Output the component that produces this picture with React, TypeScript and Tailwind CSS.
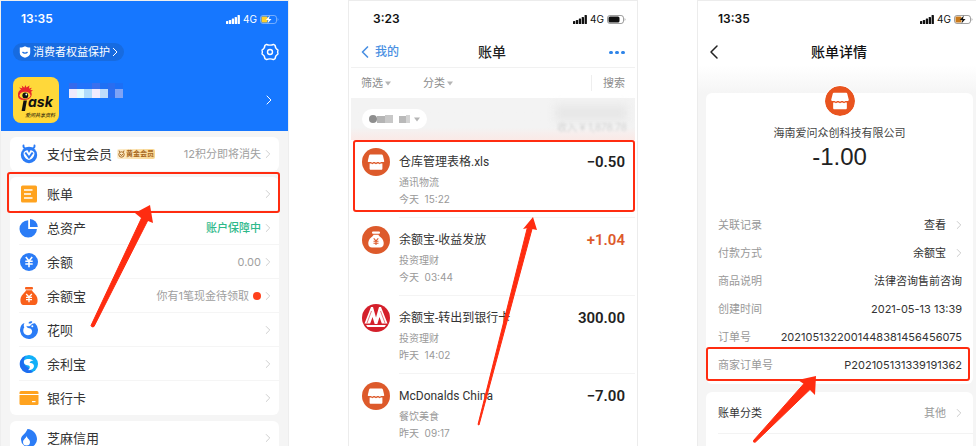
import React from "react";
import { ChevronLeft, ChevronRight } from "lucide-react";

const RED = "#ff2c10";

function StatusBar({ time, charge, tone }: { time: string; charge: string | null; tone: "light" | "dark" }) {
  const ink = tone === "light" ? "#ffffff" : "#111111";
  return (
    <div className={`flex h-9 items-center justify-between ${tone === "light" ? "text-white" : "text-[#111111]"}`}>
      <span className="text-[12px] leading-4 font-semibold">{time}</span>
      <span className="flex items-center gap-[3px]">
        <svg width="14" height="9" viewBox="0 0 14 9" fill={ink} aria-hidden="true">
          <rect x="0" y="6" width="2.300" height="3" rx="0.6" />
          <rect x="2.900" y="5" width="2.300" height="4" rx="0.6" />
          <rect x="5.800" y="3.500" width="2.300" height="5.500" rx="0.6" />
          <rect x="8.700" y="2" width="2.300" height="7" rx="0.6" />
          <rect x="11.600" y="0" width="2.300" height="9" rx="0.6" />
        </svg>
        <span className="text-[10px] leading-4">4G</span>
        <svg width="19" height="9" viewBox="0 0 19 9" aria-hidden="true">
          <rect x="0.5" y="0.5" width="16" height="8" rx="2.4" fill="none" stroke={ink} strokeOpacity="0.4" />
          <path d="M17.6 3v3c1.2-.6 1.2-2.400 0-3z" fill={ink} fillOpacity="0.4" />
          {charge ? (
            <>
              <rect x="1.500" y="1.500" width="6" height="6" rx="1" fill={charge} />
              <path d="M9.800.6 5.800 5h2.600l-.9 3.400L11.500 4H9z" fill={ink} />
            </>
          ) : (
            <rect x="1.500" y="1.500" width="11" height="6" rx="1.500" fill={ink} />
          )}
        </svg>
      </span>
    </div>
  );
}

function Arrow({ box, head, shaft }: { box: string; head: string; shaft: string }) {
  return (
    <svg className="pointer-events-none absolute top-0 left-0 h-[446px] w-[290px]" viewBox={box} fill={RED} aria-hidden="true">
      <path d={head} />
      <path d={shaft} stroke={RED} strokeWidth="1" strokeLinejoin="round" />
    </svg>
  );
}

function Highlight({ className }: { className: string }) {
  return <span className={`pointer-events-none absolute rounded-[3px] border-2 border-[#ff2c10] ${className}`} />;
}

function Avatar() {
  return (
    <svg className="h-[46px] w-[46px] rounded-lg" viewBox="0 0 46 46" role="img" aria-label="iask">
      <rect width="46" height="46" fill="#ffd83a" />
      <path
        d="M5 19c-.5-3.500 1-5.500 3-6.500L6 10.500l3.300.8-.6-2.800 2.600 2.200L12.500 8l.9 2.600L16.500 8.500l-.6 3 3-.8-1.600 2.400 2.700.2-1.900 1.400c2 4-.8 8-6.300 8.400C7.500 23.300 5.200 21.800 5 19z"
        fill="#e8282b"
      />
      <ellipse cx="12" cy="18.300" rx="5.400" ry="3.600" fill="#ffd83a" />
      <circle cx="12.300" cy="18.400" r="2.900" fill="#111" />
      <circle cx="13.300" cy="17.500" r="0.9" fill="#fff" />
      <path d="M10.500 23.500h3.400L12 34H8.600z" fill="#111" />
      <text x="15" y="30" fontSize="14" fontWeight="700" fontStyle="italic" fill="#111" fontFamily="Inter, sans-serif">
        ask
      </text>
      <text x="12" y="40" fontSize="5" fontWeight="500" fontStyle="italic" fill="#3a3110" fontFamily="'Noto Sans CJK SC', sans-serif">
        爱问共享资料
      </text>
    </svg>
  );
}

function MemberIcon() {
  return (
    <svg width="20" height="20" viewBox="0 0 20 20" fill="none" aria-hidden="true">
      <path d="M6 4.500C4.800 4 4.300 3 4.500 1.500M14 4.500c1.200-.5 1.700-1.500 1.500-3" stroke="#2b7cf6" strokeWidth="1.900" strokeLinecap="round" />
      <circle cx="10" cy="11" r="8.200" fill="#2b7cf6" />
      <path d="M4.600 8.800C5.500 7 7.500 6 8.700 6.400L10 9l1.300-2.600c1.200-.4 3.200.6 4.100 2.400.4 3-1.900 6.700-5.400 7.200-3.500-.5-5.800-4.200-5.400-7.200z" fill="#fff" />
      <path d="m6.300 8.500 3.700 5 3.700-5" stroke="#2b7cf6" strokeWidth="2" />
    </svg>
  );
}

function BillIcon() {
  return (
    <svg width="20" height="20" viewBox="0 0 20 20" fill="none" aria-hidden="true">
      <rect x="2" y="1.500" width="16" height="17" rx="1.500" fill="#ffa31f" />
      <path d="M5 6h8.500M5 10h7M5 14h8.500" stroke="#fff" strokeWidth="1.300" />
    </svg>
  );
}

function PieIcon() {
  return (
    <svg width="20" height="20" viewBox="0 0 20 20" fill="#2b7cf6" aria-hidden="true">
      <path d="M9.200 2.200v8.700h8.700A8.700 8.700 0 1 1 9.200 2.200z" />
      <path d="M11 1a8 8 0 0 1 7.800 8H11z" />
    </svg>
  );
}

function YenIcon() {
  return (
    <svg width="20" height="20" viewBox="0 0 20 20" fill="none" aria-hidden="true">
      <circle cx="10" cy="10" r="9" fill="#2b7cf6" />
      <path d="m6.800 5 3.200 4 3.200-4M6.300 9.300h7.400M6.300 12h7.400M10 9v6.300" stroke="#fff" strokeWidth="1.600" />
    </svg>
  );
}

function BagIcon() {
  return (
    <svg width="20" height="20" viewBox="0 0 20 20" fill="none" aria-hidden="true">
      <rect x="6" y="1" width="8" height="2.400" rx="1" fill="#f9601b" />
      <path d="M7 4.300h6c.3 1.200 1.200 2 2.500 3.100 2.800 2.500 3.300 5.200 3 8-.2 2.500-1.500 3.600-4 3.600h-9c-2.500 0-3.800-1.100-4-3.600-.3-2.800.2-5.500 3-8C5.800 6.300 6.700 5.500 7 4.300z" fill="#f9601b" />
      <path d="m7.200 8 2.800 3 2.800-3M7 11.300h6M7 13.600h6M10 11v5.200" stroke="#fff" strokeWidth="1.300" />
    </svg>
  );
}

function FlowerIcon() {
  return (
    <svg width="20" height="20" viewBox="0 0 20 20" fill="none" aria-hidden="true">
      <path d="M16.200 3.400A9 9 0 1 1 2.500 5c.8-1 1.800-1.700 3-2-.9 1.500-1 3-.2 4.300C3.800 9.500 3.800 12.500 6 14.300c2.700 2 6.300.9 7-2 .5-2.200-.8-3.700-2.800-4-1.700-.2-2.800-1.200-2.700-2.600 1.300.8 2.700.9 4-.3 1.300-1.300 3-2.400 4.700-2z" fill="#2b7cf6" />
      <path d="M9.500 3.200c.5-1.600 2.200-2.400 3.800-1.500-.3 1.500-2 2.500-3.800 1.500z" fill="#2b7cf6" />
      <circle cx="13.300" cy="6.300" r="1" fill="#fff" />
    </svg>
  );
}

function SwirlIcon() {
  return (
    <svg width="20" height="20" viewBox="0 0 20 20" aria-hidden="true">
      <circle cx="10" cy="10" r="9" fill="#12b0f8" />
      <path d="M7 1.500A9 9 0 1 0 14 18c-2-1.500-4-4-7-6S4 5 7 1.500z" fill="#1e6df0" />
      <path d="M14.500 6.600C12 4.600 7.500 4.300 5.300 6.300c-1.200 2.800.4 4.700 3.200 5 1.800.2 2.700 1.200 2.200 2.600-.3.900-.9 1.600-1.700 2.200 3.200.4 5.800-1.300 6-3.800.1-2-1.400-3.100-3.400-3.300-1-.1-1.200-.8-.5-1.300 1-.7 2.200-1 3.400-1.100z" fill="#fff" />
    </svg>
  );
}

function CardIcon() {
  return (
    <svg width="20" height="20" viewBox="0 0 20 20" fill="#ffa31f" aria-hidden="true">
      <path d="M2 3h16a1.500 1.500 0 0 1 1.500 1.500V6H.5V4.500A1.500 1.500 0 0 1 2 3z" />
      <path d="M.5 7h19v8.500A1.500 1.500 0 0 1 18 17H2a1.500 1.500 0 0 1-1.500-1.500z" />
      <rect x="13" y="13" width="3.500" height="1.200" fill="#fff" />
    </svg>
  );
}

function DropIcon() {
  return (
    <svg width="20" height="20" viewBox="0 0 20 20" aria-hidden="true">
      <path d="M8.500 1c5.500.5 9.500 5 9.500 10a8 8 0 0 1-16 .5C2 8 5 6.500 6.500 4.500 7.300 3.400 8 2.300 8.500 1z" fill="#2b7cf6" />
      <path d="M7.500 8c.5 2.200 3.500 3.500 3.500 6a3.500 3.500 0 0 1-7 0C4 11.500 7 10.500 7.500 8z" fill="#fff" />
    </svg>
  );
}

function ShopIcon({ className, color }: { className: string; color: string }) {
  return (
    <svg className={className} viewBox="0 0 28 28" aria-hidden="true">
      <circle cx="14" cy="14" r="14" fill={color} />
      <path
        d="M8.800 6.400h10.400c1 0 1.500.4 1.700 1.200l1.300 5.300c.1.700-.3 1-.9 1h-2.200l-1.300.9-1.300-.9h-1.200l-1.300.9-1.300-.9h-1.200l-1.300.9-1.300-.9H6.700c-.6 0-1-.3-.9-1l1.300-5.300c.2-.8.700-1.200 1.700-1.200z"
        fill="#fff"
      />
      <path d="M7.600 15.400h1.600l1 .8 1.400-.8h1l1.400.8 1.400-.8h1l1.400.8 1-.8h1.600v5.100c0 .9-.4 1.300-1.200 1.300H8.800c-.8 0-1.200-.4-1.200-1.300z" fill="#fff" />
    </svg>
  );
}

function FundIcon() {
  return (
    <svg className="h-7 w-7" viewBox="0 0 28 28" fill="none" aria-hidden="true">
      <circle cx="14" cy="14" r="14" fill="#dd5a2b" />
      <rect x="10" y="5.500" width="8" height="2.200" rx="1" fill="#fff" />
      <path d="M11.500 8.700h5c.2 1 1.200 1.700 2.200 2.500 2.400 2 3.200 4.300 3 6.600-.2 2.600-1.500 3.700-3.700 3.700h-8c-2.200 0-3.500-1.100-3.700-3.700-.2-2.300.6-4.600 3-6.600 1-.8 2-1.500 2.200-2.500z" fill="#fff" />
      <path d="m11.700 12.300 2.300 2.500 2.300-2.500M11.500 15.200h5M11.500 17.200h5M14 14.500v4.600" stroke="#dd5a2b" strokeWidth="1.100" />
    </svg>
  );
}

function BankIcon() {
  return (
    <svg className="h-7 w-7" viewBox="0 0 28 28" fill="none" aria-hidden="true">
      <circle cx="14" cy="14" r="14" fill="#d4202b" />
      <path d="M2.500 19.500 9 3h2L14 13.500 17 3h2l6.500 16.500h-5.700L17.500 13 15.300 20h-2.600l-2.200-7-2.300 6.500z" fill="#fff" />
      <path d="m5 19 4.500-12M23 19 18.500 7" stroke="#d4202b" strokeWidth="0.600" />
      <path d="M4 21h20l-1.500 2H5.500z" fill="#fff" />
    </svg>
  );
}

type Row = { icon: React.ReactNode; label: string; note?: string; tone?: string; badge?: boolean; dot?: boolean; mark?: boolean };

const accountGroups: Row[][] = [
  [{ icon: <MemberIcon />, label: "支付宝会员", note: "12积分即将消失", badge: true }],
  [
    { icon: <BillIcon />, label: "账单", mark: true },
    { icon: <PieIcon />, label: "总资产", note: "账户保障中", tone: "text-[#2fb98a] font-medium" },
    { icon: <YenIcon />, label: "余额", note: "0.00" },
    { icon: <BagIcon />, label: "余额宝", note: "你有1笔现金待领取", dot: true },
    { icon: <FlowerIcon />, label: "花呗" },
    { icon: <SwirlIcon />, label: "余利宝" },
    { icon: <CardIcon />, label: "银行卡" },
  ],
  [{ icon: <DropIcon />, label: "芝麻信用" }],
];

const mosaic = [
  "bg-[#356bec]", "bg-[#2272fa]", "bg-[#2272fa]", "bg-[#3a70ee]", "bg-[#1f70f4]", "bg-[#2a6df0]", "bg-[#1c6ff6]",
  "bg-[#efeafc]", "bg-[#dffbff]", "bg-[#b0dcfb]", "bg-[#f1ebfe]", "bg-[#bcdcfb]", "bg-[#2b6ff2]", "bg-[#7fa3f5]",
];

function AccountScreen() {
  return (
    <section className="relative overflow-hidden border border-b-0 border-[#eeeeee] bg-[#f5f5f5]">
      <header className="h-[130px] bg-[#1677ff] pr-[9px] pl-3 text-white">
        <div className="pl-2">
          <StatusBar time="13:35" charge="#ffd02e" tone="light" />
        </div>
        <div className="mt-[6px] flex items-center justify-between">
          <button type="button" className="flex h-[18px] items-center gap-[2px] rounded-full bg-[#176be0] px-[6px] text-[11px] leading-[18px]">
            <svg width="12" height="12" viewBox="0 0 12 12" aria-hidden="true">
              <path d="M6 .3c1.500.9 3.200 1.300 5.200 1.300V7c0 2.600-2.200 4-5.200 4.800C3 11 .8 9.600.8 7V1.600C2.800 1.600 4.500 1.200 6 .3z" fill="#fff" />
              <path d="M3.500 6c1.300 1.600 3.700 1.600 5 0" stroke="#1268df" strokeWidth="1.200" fill="none" />
            </svg>
            消费者权益保护
            <svg width="6" height="10" viewBox="0 0 6 10" fill="none" stroke="#fff" aria-hidden="true">
              <path d="m1 1 4 4-4 4" />
            </svg>
          </button>
          <button type="button" aria-label="设置">
            <svg width="18" height="18" viewBox="0 0 18 18" fill="none" stroke="#fff" strokeWidth="1.400" strokeLinejoin="round" aria-hidden="true">
              <path d="M5.600 1.400c1.500 1 5.300 1 6.800 0l1.700 1c.1 2 1.200 3.700 2.900 4.600-.5 1.300-.5 2.700 0 4-1.700.9-2.800 2.600-2.900 4.600l-1.700 1c-1.500-1-5.300-1-6.800 0l-1.700-1C3.800 13.600 2.700 11.900 1 11c.5-1.300.5-2.700 0-4 1.700-.9 2.800-2.600 2.900-4.600z" />
              <circle cx="9" cy="9" r="2.500" />
            </svg>
          </button>
        </div>
        <div className="mt-4 flex items-center">
          <Avatar />
          <span className="mb-5 ml-[10px] grid w-[54px] grid-cols-7 grid-rows-[6px_9px]">
            {mosaic.map((c, i) => (
              <i key={i} className={c} />
            ))}
          </span>
          <ChevronRight className="mr-[2px] ml-auto h-4 w-4" strokeWidth={1.5} />
        </div>
      </header>
      <div className="flex flex-col gap-[6px] px-[9px] pt-[6px]">
        {accountGroups.map((group, g) => (
          <ul key={g} className="rounded-md bg-white">
            {group.map((row, i) => (
              <li key={row.label} className="relative pl-[9px]">
                <button
                  type="button"
                  className={`flex h-[34px] w-full items-center pr-1 text-left ${i < group.length - 1 ? "border-b border-[#f5f5f5]" : ""}`}
                >
                  {row.icon}
                  <span className="ml-2 text-[13px] leading-5 text-[#333333]">{row.label}</span>
                  {row.badge && (
                    <span className="ml-[5px] flex h-[10px] items-center gap-px rounded-[2px] bg-gradient-to-r from-[#fdeed0] to-[#f9d58c] px-px text-[7px] leading-[10px] font-bold text-[#a8691f]">
                      <svg width="7" height="8" viewBox="0 0 7 8" fill="none" stroke="#a8691f" aria-hidden="true">
                        <circle cx="3.500" cy="4.500" r="2.700" />
                        <path d="M1.500 2 1 .5M5.500 2 6 .5M2.200 4l1.300 1.700L4.800 4" />
                      </svg>
                      黄金会员
                    </span>
                  )}
                  <span className={`ml-auto text-[11px] leading-4 ${row.tone ?? "text-[#a0a0a0]"}`}>{row.note}</span>
                  {row.dot && <i className="ml-1 h-2 w-2 rounded-full bg-[#ff411c]" />}
                  <ChevronRight className="h-[14px] w-[14px] text-[#c8c8c8]" strokeWidth={1.5} />
                </button>
                {row.mark && <Highlight className="-top-[5px] -right-[1px] -bottom-[2px] -left-[3px]" />}
              </li>
            ))}
          </ul>
        ))}
      </div>
      <Arrow box="1 1 290 446" head="M150 205 135 213 141 218 148 221 153 223z" shaft="M142 217 91 325.500Q92 328 94 326.500L148 220z" />
    </section>
  );
}

const bills = [
  { icon: <ShopIcon className="h-7 w-7" color="#dd5a2b" />, title: "仓库管理表格.xls", kind: "通讯物流", time: "今天  15:22", amount: "−0.50", mark: true },
  { icon: <FundIcon />, title: "余额宝-收益发放", kind: "投资理财", time: "今天  03:44", amount: "+1.04", tone: "text-[#dd5a2b]" },
  { icon: <BankIcon />, title: "余额宝-转出到银行卡", kind: "投资理财", time: "昨天  14:02", amount: "300.00" },
  { icon: <ShopIcon className="h-7 w-7" color="#dd5a2b" />, title: "McDonalds China", kind: "餐饮美食", time: "昨天  09:17", amount: "−7.00" },
];

function Caret() {
  return (
    <svg width="6" height="5" viewBox="0 0 6 5" fill="#b5b5b5" aria-hidden="true">
      <path d="M0 .5h6L3 4.500z" />
    </svg>
  );
}

function BillListScreen() {
  return (
    <section className="relative overflow-hidden border border-b-0 border-[#ececec] bg-white px-[2px]">
      <div className="pr-[9px] pl-[22px]">
        <StatusBar time="3:23" charge={null} tone="dark" />
      </div>
      <nav className="grid h-[30px] grid-cols-3 items-center pr-[10px] pl-1">
        <button type="button" className="flex items-center text-[12px] leading-5 font-medium text-[#4a90e2]">
          <ChevronLeft className="h-5 w-5" strokeWidth={2} />
          我的
        </button>
        <h2 className="pl-1 text-center text-[14px] leading-5 font-medium text-[#222222]">账单</h2>
        <button type="button" aria-label="更多" className="flex gap-[2px] justify-self-end">
          <i className="h-[3px] w-1 rounded-full bg-[#2f84e8]" />
          <i className="h-[3px] w-1 rounded-full bg-[#2f84e8]" />
          <i className="h-[3px] w-1 rounded-full bg-[#2f84e8]" />
        </button>
      </nav>
      <div className="flex h-[31px] items-center border-t border-[#f1f1f1] px-[10px] text-[11px] leading-4 text-[#8c8c8c]">
        <button type="button" className="flex items-center gap-[2px]">
          筛选
          <Caret />
        </button>
        <button type="button" className="ml-8 flex items-center gap-[2px]">
          分类
          <Caret />
        </button>
        <button type="button" className="ml-auto border-l border-[#eeeeee] pl-[11px]">
          搜索
        </button>
      </div>
      <div className="flex h-[42px] items-center justify-between bg-gradient-to-b from-[#f3f3f3] from-70% to-[#fbe9e6] pr-2 pl-[11px]">
        <button type="button" aria-label="月份" className="flex h-5 items-center rounded-full bg-white px-[7px]">
          <i className="h-2 w-2 rounded-sm bg-[#8e8e8e]" />
          <i className="h-[7px] w-2 bg-[#b4b4b4]" />
          <i className="h-2 w-2 bg-[#c8c8c8]" />
          <i className="ml-[6px] h-[7px] w-[7px] bg-[#b9b9b9]" />
          <i className="mr-[4px] h-2 w-1 bg-[#d3d3d3]" />
          <Caret />
        </button>
        <span className="flex flex-col items-end">
          <i className="h-4 w-[72px] bg-[#e7e7e7] blur-[4px]" />
          <span className="text-[10px] leading-3 text-[#d4d4d4] blur-[1px]">收入 ¥ 1,878.78</span>
        </span>
      </div>
      <ul>
        {bills.map((b) => (
          <li key={b.title} className="relative flex gap-[9px] pl-[11px]">
            <span className="pt-2">{b.icon}</span>
            <div className="flex flex-1 justify-between border-b border-[#f4f4f4] pt-[13px] pr-[10px] pb-[10px]">
              <div className="text-[10px] text-[#999999]">
                <h3 className="font-[Roboto,'Noto_Sans_CJK_SC',sans-serif] text-[12px] leading-[18px] whitespace-nowrap text-[#333333]">{b.title}</h3>
                <p className="mt-[2px] leading-[18px]">{b.kind}</p>
                <p className="leading-4 whitespace-pre">{b.time}</p>
              </div>
              <strong className={`font-[Roboto,sans-serif] text-[15px] leading-[18px] font-semibold ${b.tone ?? "text-[#222222]"}`}>{b.amount}</strong>
            </div>
            {b.mark && <Highlight className="top-0 right-0 bottom-[6px] left-[2px]" />}
          </li>
        ))}
      </ul>
      <Arrow box="349 1 290 446" head="M533 217 523 229 528 228 532 229 537 230z" shaft="M527.500 227 478 424.500 479 425 532 229z" />
    </section>
  );
}

const details = [
  { label: "关联记录", value: "查看", link: true },
  { label: "付款方式", value: "余额宝", link: true },
  { label: "商品说明", value: "法律咨询售前咨询" },
  { label: "创建时间", value: "2021-05-13 13:39" },
  { label: "订单号", value: "2021051322001448381456456075" },
  { label: "商家订单号", value: "P202105131339191362", mark: true },
];

function BillDetailScreen() {
  return (
    <section className="relative overflow-hidden border border-r-0 border-b-0 border-[#ececec] bg-[#f5f5f5]">
      <div className="bg-gradient-to-b from-white from-70% to-[#f5f5f5] pb-[26px]">
        <div className="pr-[3px] pl-5">
          <StatusBar time="13:35" charge="#c97a1c" tone="dark" />
        </div>
        <nav className="grid h-[30px] grid-cols-[24px_1fr_24px] items-center pl-1">
          <button type="button" aria-label="返回">
            <ChevronLeft className="h-6 w-6 text-[#222222]" strokeWidth={1.5} />
          </button>
          <h2 className="text-center text-[14px] leading-5 font-medium text-[#111111]">账单详情</h2>
        </nav>
      </div>
      <div className="mr-[3px] ml-2 flex flex-col gap-2">
        <div className="rounded-md bg-white pb-[5px]">
          <div className="-mt-2 flex flex-col items-center">
            <ShopIcon className="h-8 w-8 rounded-full border border-white" color="#e9541f" />
            <p className="mt-2 text-[11px] leading-4 text-[#444444]">海南爱问众创科技有限公司</p>
            <p className="font-['Liberation_Sans',sans-serif] text-[24px] leading-8 text-[#222222]">-1.00</p>
          </div>
          <dl className="mt-[38px] text-[11px] leading-4">
            {details.map((d) => (
              <div key={d.label} className="relative flex h-7 items-center justify-between pr-[11px] pl-3">
                <dt className="text-[#999999]">{d.label}</dt>
                <dd className="flex items-center gap-[6px] text-[#333333]">
                  {d.value}
                  {d.link && <ChevronRight className="-mr-1 h-[14px] w-[14px] text-[#c4c4c4]" strokeWidth={1.5} />}
                </dd>
                {d.mark && <Highlight className="-top-1 right-[3px] -bottom-[2px] left-0" />}
              </div>
            ))}
          </dl>
        </div>
        <div className="rounded-t-md bg-white pl-3 text-[11px] leading-4">
          <button type="button" className="flex h-[42px] w-full items-center border-b border-[#f3f3f3] pr-[7px] text-[#333333]">
            账单分类
            <span className="mr-[6px] ml-auto text-[#999999]">其他</span>
            <ChevronRight className="h-[14px] w-[14px] text-[#c4c4c4]" strokeWidth={1.5} />
          </button>
          <div className="h-8" />
        </div>
      </div>
      <Arrow box="698 1 290 446" head="M816 376 798 380 804 384 810 390 815 395z" shaft="M804.500 383 753.500 440.500Q753 443 755.500 442L810.500 389z" />
    </section>
  );
}

export default function App() {
  return (
    <main className="grid h-screen grid-cols-[289fr_290fr_279fr] gap-[59px] overflow-hidden bg-white font-[Inter,'Noto_Sans_CJK_SC',sans-serif]">
      <AccountScreen />
      <BillListScreen />
      <BillDetailScreen />
    </main>
  );
}
